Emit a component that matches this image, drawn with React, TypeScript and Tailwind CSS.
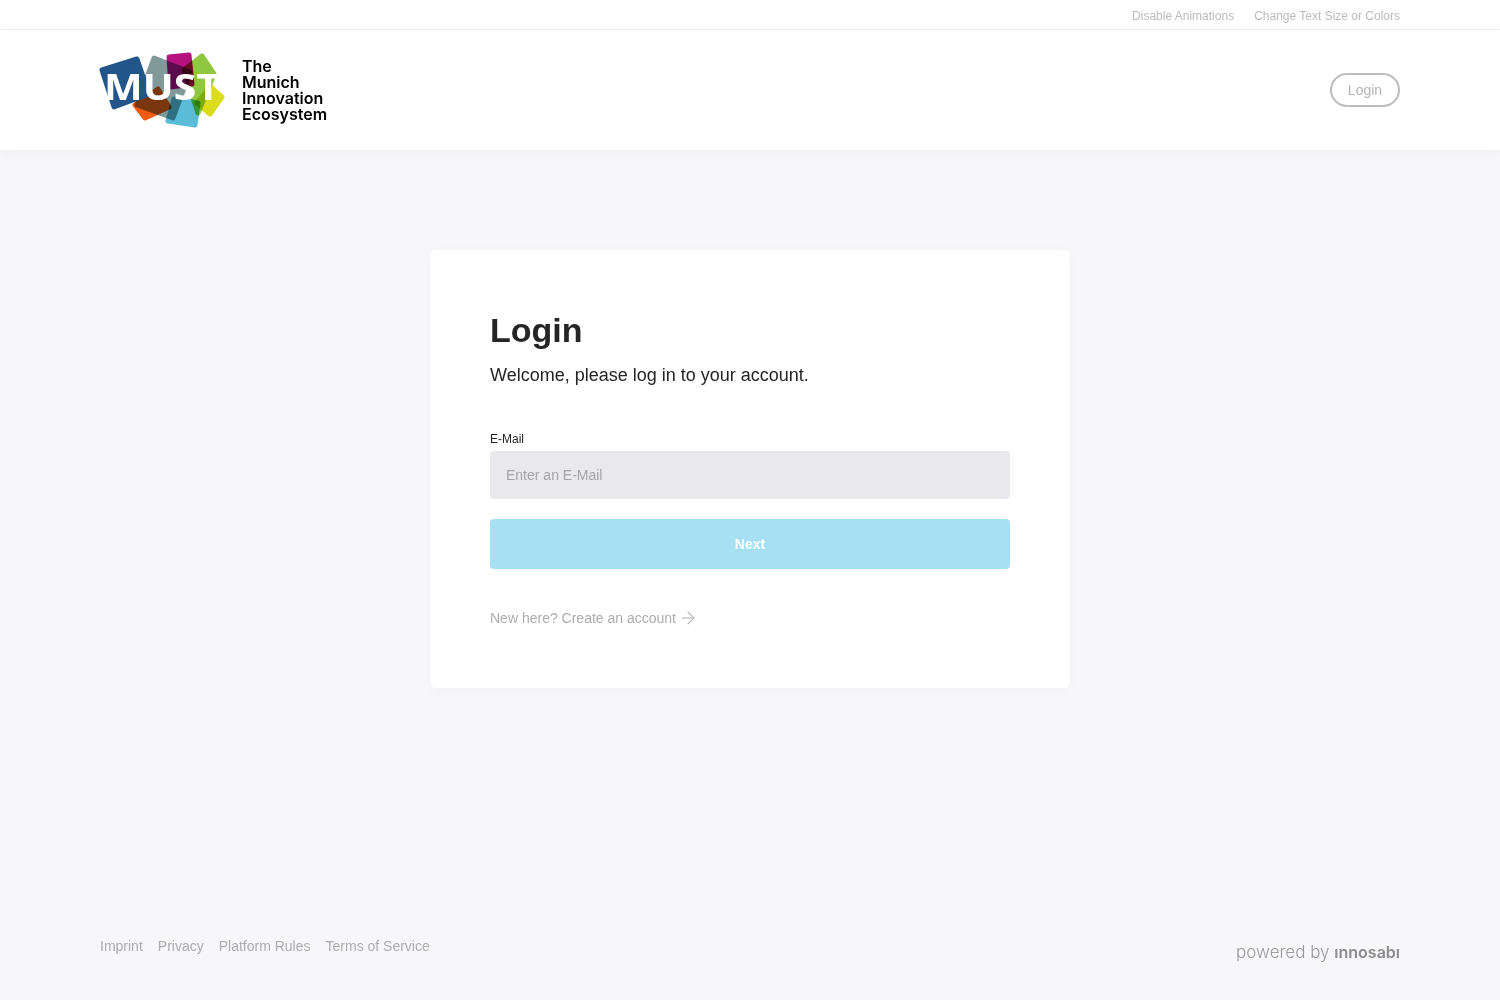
import { ArrowRight } from "lucide-react";

const topLinks = ["Disable Animations", "Change Text Size or Colors"];
const footerLinks = ["Imprint", "Privacy", "Platform Rules", "Terms of Service"];

const Logo = () => {
  return (
    <div className="flex items-center">
      <svg width="130" height="80" viewBox="0 0 130 80" className="block">
        <g strokeLinejoin="round" strokeWidth="5">
          <polygon className="mix-blend-multiply" points="37,55 60,39 71,57 47,68" fill="#f05a14" stroke="#f05a14" />
          <polygon className="mix-blend-multiply" points="76,49 100,53 97,75 70,71" fill="#5bbcd8" stroke="#5bbcd8" />
          <polygon className="mix-blend-multiply" points="113,37 124,47 112,64 99,53" fill="#dcdc1e" stroke="#dcdc1e" />
          <polygon className="mix-blend-multiply" points="104,6 116,24 100,63 86,20" fill="#8fc741" stroke="#8fc741" />
          <polygon className="mix-blend-multiply" points="71,7 91,5 94,34 73,37" fill="#b5127f" stroke="#b5127f" />
          <polygon className="mix-blend-multiply" points="56,8 92,22 75,68 39,55" fill="#82999a" stroke="#82999a" />
          <polygon points="4,20 39,9 51,44 16,57" fill="#22568a" stroke="#22568a" />
        </g>
        <text
          x="6"
          y="50"
          fill="#ffffff"
          textLength="116"
          lengthAdjust="spacingAndGlyphs"
          className="text-[36px] font-bold font-['Open_Sans',sans-serif]"
        >
          MUST
        </text>
      </svg>
      <div className="ml-[14px] text-[16px] leading-[16px] font-semibold text-black font-['Inter',sans-serif]">
        <div>The</div>
        <div>Munich</div>
        <div>Innovation</div>
        <div>Ecosystem</div>
      </div>
    </div>
  );
};

export default function App() {
  return (
    <div className="min-h-[1000px] flex flex-col bg-[#f7f7f9] font-['Liberation_Sans',Arial,sans-serif]">
      <div className="bg-white h-[30px] pt-[2px] border-b border-[#f0f0f0] flex items-center justify-end gap-5 px-[100px] text-xs text-[#bbbbbb]">
        {topLinks.map((link) => (
          <span key={link}>{link}</span>
        ))}
      </div>
      <header className="bg-white h-[120px] shrink-0 flex items-center justify-between pl-[98px] pr-[100px] shadow-[0_2px_10px_rgba(0,0,0,0.04)]">
        <Logo />
        <button className="w-[70px] h-[34px] rounded-full border-2 border-[#bdbdbd] text-sm text-[#b5b5b5]">
          Login
        </button>
      </header>

      <main className="flex justify-center pt-[100px]">
        <div className="w-[640px] h-[438px] bg-white rounded-md px-[60px] pt-[60px] shadow-[0_2px_12px_rgba(0,0,0,0.03)]">
          <h1 className="text-[34px] leading-[40px] font-bold text-[#252525]">Login</h1>
          <p className="mt-[13px] text-lg leading-[24px] text-[#252525]">
            Welcome, please log in to your account.
          </p>
          <label className="block mt-[45px] text-xs leading-[14px] text-[#252525]">E-Mail</label>
          <div className="mt-[5px] h-12 bg-[#e9e9ed] rounded-sm flex items-center px-4 text-sm text-[#a5a5a8]">
            Enter an E-Mail
          </div>
          <button className="mt-5 w-full h-[50px] bg-[#a7e0f3] rounded-sm text-sm font-bold text-white">
            Next
          </button>
          <div className="mt-10 h-[18px] flex items-center gap-[2px] text-sm leading-[18px] text-[#adadad]">
            New here? Create an account
            <ArrowRight size={20} strokeWidth={1.25} />
          </div>
        </div>
      </main>

      <footer className="mt-auto h-[64px] flex items-start justify-between px-[100px]">
        <div className="flex gap-[15px] text-sm text-[#adadad]">
          {footerLinks.map((link) => (
            <span key={link}>{link}</span>
          ))}
        </div>
        <div className="mt-[5px] text-[17px] leading-[22px] font-light text-[#9a9a9d] font-['Inter',sans-serif]">
          powered by <span className="text-[16px] font-semibold text-[#8c8c8f]">ınnosabı</span>
        </div>
      </footer>
    </div>
  );
}
